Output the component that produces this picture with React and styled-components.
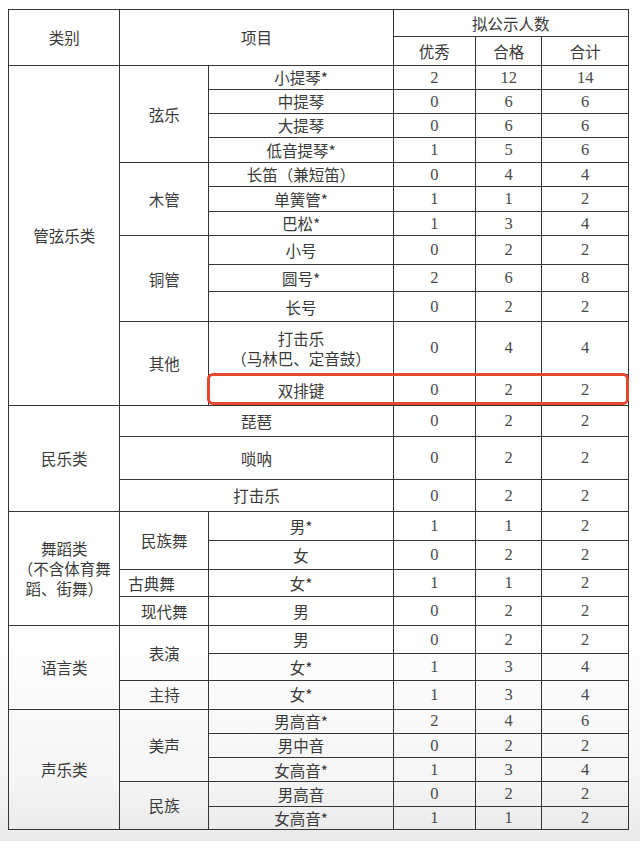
import React from 'react';
import styled, { createGlobalStyle } from 'styled-components';

const GlobalStyle = createGlobalStyle`
  html, body {
    margin: 0;
    padding: 0;
  }
  body {
    min-height: 841px;
    background: linear-gradient(to bottom, #ffffff 0, #ffffff 620px, #f5f5f5 780px, #e9e9e9 841px);
    font-family: "Noto Sans CJK SC", "Noto Sans", sans-serif;
    color: #333;
  }
`;

const Page = styled.div`
  position: relative;
  padding: 9px 12px 12px 8px;
`;

const Sheet = styled.table`
  border-collapse: collapse;
  table-layout: fixed;
  width: 620px;
`;

const Row = styled.tr`
  height: ${(p) => p.$h}px;
`;

const Cell = styled.td`
  border: 1px solid #353535;
  text-align: ${(p) => p.$align || 'center'};
  padding: 0 ${(p) => (p.$align === 'left' ? '8px' : '4px')};
  font-size: 15.5px;
  line-height: 1.3;
  color: #3a3a3a;
  vertical-align: middle;
`;

const Num = styled(Cell)`
  font-family: "Liberation Serif", "DejaVu Serif", serif;
  font-size: 16.5px;
  color: #4a4a4a;
`;

const Highlight = styled.div`
  position: absolute;
  left: 207px;
  top: 373px;
  width: 422px;
  height: 32px;
  box-sizing: border-box;
  border: 3px solid #e5472f;
  border-radius: 6px;
  pointer-events: none;
`;

// one entry per body row: heights measured from the ruled lines
const rows = [
  { h: 24.3, group: { text: '管弦乐类', span: 12 }, sub: { text: '弦乐', span: 4 }, item: '小提琴*', v: [2, 12, 14] },
  { h: 24, item: '中提琴', v: [0, 6, 6] },
  { h: 24, item: '大提琴', v: [0, 6, 6] },
  { h: 24.7, item: '低音提琴*', v: [1, 5, 6] },
  { h: 24.7, sub: { text: '木管', span: 3 }, item: '长笛（兼短笛）', v: [0, 4, 4] },
  { h: 24.3, item: '单簧管*', v: [1, 1, 2] },
  { h: 24.3, item: '巴松*', v: [1, 3, 4] },
  { h: 29, sub: { text: '铜管', span: 3 }, item: '小号', v: [0, 2, 2] },
  { h: 27.4, item: '圆号*', v: [2, 6, 8] },
  { h: 30, item: '长号', v: [0, 2, 2] },
  { h: 52.3, sub: { text: '其他', span: 2 }, item: ['打击乐', '（马林巴、定音鼓）'], v: [0, 4, 4] },
  { h: 31, item: '双排键', v: [0, 2, 2] },
  { h: 31.7, group: { text: '民乐类', span: 3 }, wide: '琵琶', v: [0, 2, 2] },
  { h: 42.6, wide: '唢呐', v: [0, 2, 2] },
  { h: 31.7, wide: '打击乐', v: [0, 2, 2] },
  { h: 29.7, group: { text: ['舞蹈类', '（不含体育舞蹈、街舞）'], span: 4 }, sub: { text: '民族舞', span: 2 }, item: '男*', v: [1, 1, 2] },
  { h: 28.3, item: '女', v: [0, 2, 2] },
  { h: 27.7, sub: { text: '古典舞', span: 1, align: 'left' }, item: '女*', v: [1, 1, 2] },
  { h: 28.3, sub: { text: '现代舞', span: 1 }, item: '男', v: [0, 2, 2] },
  { h: 28.3, group: { text: '语言类', span: 3 }, sub: { text: '表演', span: 2 }, item: '男', v: [0, 2, 2] },
  { h: 26.7, item: '女*', v: [1, 3, 4] },
  { h: 29, sub: { text: '主持', span: 1 }, item: '女*', v: [1, 3, 4] },
  { h: 24.3, group: { text: '声乐类', span: 5 }, sub: { text: '美声', span: 3 }, item: '男高音*', v: [2, 4, 6] },
  { h: 24.4, item: '男中音', v: [0, 2, 2] },
  { h: 24, item: '女高音*', v: [1, 3, 4] },
  { h: 24.3, sub: { text: '民族', span: 2 }, item: '男高音', v: [0, 2, 2] },
  { h: 23.3, item: '女高音*', v: [1, 1, 2] },
];

const Lines = ({ text }) =>
  Array.isArray(text)
    ? text.map((t, i) => (
        <React.Fragment key={i}>
          {i > 0 && <br />}
          {t}
        </React.Fragment>
      ))
    : text;

const App = () => {
  return (
    <>
      <GlobalStyle />
      <Page>
        <Sheet>
          <colgroup>
            <col style={{ width: 111.3 }} />
            <col style={{ width: 89 }} />
            <col style={{ width: 184.4 }} />
            <col style={{ width: 82.3 }} />
            <col style={{ width: 66.3 }} />
            <col style={{ width: 86.7 }} />
          </colgroup>
          <thead>
            <Row $h={27.4}>
              <Cell rowSpan={2}>类别</Cell>
              <Cell rowSpan={2} colSpan={2}>项目</Cell>
              <Cell colSpan={3}>拟公示人数</Cell>
            </Row>
            <Row $h={28.3}>
              <Cell>优秀</Cell>
              <Cell>合格</Cell>
              <Cell>合计</Cell>
            </Row>
          </thead>
          <tbody>
            {rows.map((r, i) => (
              <Row key={i} $h={r.h}>
                {r.group && (
                  <Cell rowSpan={r.group.span}>
                    <Lines text={r.group.text} />
                  </Cell>
                )}
                {r.wide ? (
                  <Cell colSpan={2}>{r.wide}</Cell>
                ) : (
                  <>
                    {r.sub && (
                      <Cell rowSpan={r.sub.span} $align={r.sub.align}>
                        {r.sub.text}
                      </Cell>
                    )}
                    <Cell>
                      <Lines text={r.item} />
                    </Cell>
                  </>
                )}
                {r.v.map((n, j) => (
                  <Num key={j}>{n}</Num>
                ))}
              </Row>
            ))}
          </tbody>
        </Sheet>
        <Highlight />
      </Page>
    </>
  );
};

export default App;
